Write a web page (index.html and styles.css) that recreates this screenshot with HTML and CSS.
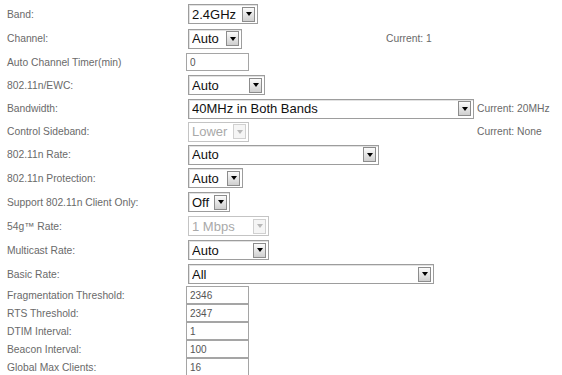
FILE: index.html
```html
<!DOCTYPE html>
<html lang="en">
<head>
<meta charset="UTF-8">
<title>Wireless Advanced</title>
<link rel="stylesheet" href="styles.css">
</head>
<body>
<form class="cfg" action="#" method="post">

  <div class="row">
    <label>Band:</label>
    <div class="ctl">
      <span class="sel w-band"><select><option>2.4GHz</option></select><i class="btn"></i></span>
    </div>
  </div>

  <div class="row h25">
    <label>Channel:</label>
    <div class="ctl">
      <span class="sel w-chan"><select><option>Auto</option></select><i class="btn"></i></span>
      <span class="note chan-note">Current: 1</span>
    </div>
  </div>

  <div class="row h22">
    <label>Auto Channel Timer(min)</label>
    <div class="ctl"><input type="text" value="0"></div>
  </div>

  <div class="row">
    <label>802.11n/EWC:</label>
    <div class="ctl">
      <span class="sel w-ewc"><select><option>Auto</option></select><i class="btn"></i></span>
    </div>
  </div>

  <div class="row h23">
    <label>Bandwidth:</label>
    <div class="ctl wide">
      <span class="sel w-bw"><select><option>40MHz in Both Bands</option></select><i class="btn"></i></span>
    </div>
    <span class="note">Current: 20MHz</span>
  </div>

  <div class="row h23">
    <label>Control Sideband:</label>
    <div class="ctl wide">
      <span class="sel off w-side"><select disabled><option>Lower</option></select><i class="btn"></i></span>
    </div>
    <span class="note">Current: None</span>
  </div>

  <div class="row h23">
    <label>802.11n Rate:</label>
    <div class="ctl">
      <span class="sel w-rate"><select><option>Auto</option></select><i class="btn"></i></span>
    </div>
  </div>

  <div class="row">
    <label>802.11n Protection:</label>
    <div class="ctl">
      <span class="sel w-prot"><select><option>Auto</option></select><i class="btn"></i></span>
    </div>
  </div>

  <div class="row">
    <label>Support 802.11n Client Only:</label>
    <div class="ctl">
      <span class="sel w-only"><select><option>Off</option></select><i class="btn"></i></span>
    </div>
  </div>

  <div class="row">
    <label>54g&trade; Rate:</label>
    <div class="ctl">
      <span class="sel off w-54g"><select disabled><option>1 Mbps</option></select><i class="btn"></i></span>
    </div>
  </div>

  <div class="row">
    <label>Multicast Rate:</label>
    <div class="ctl">
      <span class="sel w-mcast"><select><option>Auto</option></select><i class="btn"></i></span>
    </div>
  </div>

  <div class="row">
    <label>Basic Rate:</label>
    <div class="ctl">
      <span class="sel w-basic"><select><option>All</option></select><i class="btn"></i></span>
    </div>
  </div>

  <div class="row h18">
    <label>Fragmentation Threshold:</label>
    <div class="ctl"><input type="text" value="2346"></div>
  </div>
  <div class="row h18">
    <label>RTS Threshold:</label>
    <div class="ctl"><input type="text" value="2347"></div>
  </div>
  <div class="row h18">
    <label>DTIM Interval:</label>
    <div class="ctl"><input type="text" value="1"></div>
  </div>
  <div class="row h18">
    <label>Beacon Interval:</label>
    <div class="ctl"><input type="text" value="100"></div>
  </div>
  <div class="row h18">
    <label>Global Max Clients:</label>
    <div class="ctl"><input type="text" value="16"></div>
  </div>

</form>
</body>
</html>
```

FILE: styles.css
```css
:root {
  --cor-label: #6a6a6a;
  --cor-borda: #9d9d9d;
  --cor-off: #a9a9a9;
}

body {
  margin: 0;
  padding: 2px 0 0 7px;
  background: #fff;
  font-family: 'Liberation Sans', Arial, sans-serif;
  overflow: hidden;
}

.cfg {
  margin: 0;
}

.row {
  display: flex;
  align-items: center;
  height: 24px;
}

.row.h25 { height: 25px; }
.row.h23 { height: 23px; }
.row.h22 { height: 22px; }
.row.h18 { height: 18px; }

label {
  width: 179px;
  flex: none;
  font-size: 10.3px;
  color: var(--cor-label);
}

.ctl {
  display: flex;
  align-items: center;
}

.ctl.wide {
  width: 291px;
}

.note {
  font-size: 10.3px;
  color: var(--cor-label);
}

.chan-note {
  margin-left: 144px;
}

/* select com botao no estilo antigo */
.sel {
  display: inline-flex;
  align-items: center;
  box-sizing: border-box;
  height: 20px;
  margin-left: 2px;
  padding-right: 2px;
  border: 1px solid var(--cor-borda);
  box-shadow: inset 1px 1px 0 #e2e2e2;
  background: #fff;
}

.sel select {
  flex: 1;
  min-width: 0;
  height: 100%;
  padding: 0 0 0 3px;
  border: none;
  background: transparent;
  font-family: 'Liberation Sans', Arial, sans-serif;
  font-size: 13px;
  color: #111;
  appearance: none;
  -webkit-appearance: none;
  outline: none;
}

.btn {
  display: flex;
  align-items: center;
  justify-content: center;
  box-sizing: border-box;
  width: 13px;
  height: 15px;
  flex: none;
  border: 1px solid #8c8c8c;
  background: linear-gradient(#fbfbfb, #cfcfcf);
}

.btn::after {
  content: "";
  border-top: 4px solid #000;
  border-left: 3.5px solid transparent;
  border-right: 3.5px solid transparent;
}

.sel.off {
  border-color: #c4c4c4;
  box-shadow: none;
}

.sel.off select {
  color: var(--cor-off);
  opacity: 1;
}

.sel.off .btn {
  border-color: #d0d0d0;
  background: #f5f5f5;
}

.sel.off .btn::after {
  border-top-color: #b8b8b8;
}

.w-band { width: 70px; }
.w-chan { width: 54px; }
.w-ewc { width: 77px; }
.w-bw { width: 286px; }
.w-side { width: 61px; }
.w-rate { width: 191px; }
.w-prot { width: 55px; }
.w-only { width: 42px; }
.w-54g { width: 81px; }
.w-mcast { width: 81px; }
.w-basic { width: 246px; }

input[type="text"] {
  box-sizing: border-box;
  width: 63px;
  height: 18px;
  margin: 0;
  padding: 0 3px;
  border: 1px solid #a5a5a5;
  font-family: 'Liberation Sans', Arial, sans-serif;
  font-size: 10px;
  color: #555;
}
```
